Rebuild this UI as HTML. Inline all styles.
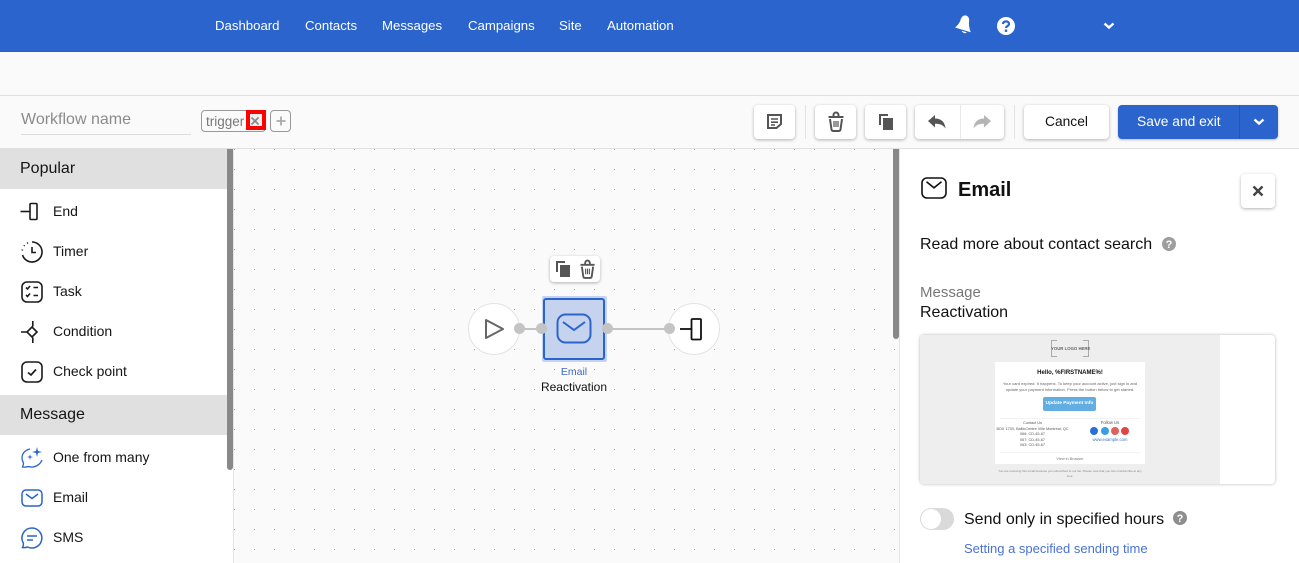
<!DOCTYPE html>
<html><head><meta charset="utf-8"><style>
*{box-sizing:border-box}
html,body{margin:0;padding:0;width:1299px;height:563px;overflow:hidden;background:#fafafa;font-family:"Liberation Sans",Arial,sans-serif;color:#111}
.t{position:absolute;white-space:nowrap;line-height:1}
.a{position:absolute}
svg{position:absolute;overflow:visible}
.btn{position:absolute;background:#fff;border-radius:4px;box-shadow:0 1px 3px rgba(0,0,0,.3)}
.nav{position:absolute;top:18px;color:#fff;font-size:13.2px;line-height:16px;white-space:nowrap}
.mi{position:absolute;left:53px;font-size:14px;line-height:16px;color:#151515;white-space:nowrap}
.hd{position:absolute;left:0;width:227px;height:40px;background:#e0e0e0;font-size:16px;line-height:40px;padding-left:20px;color:#151515}
.th{position:absolute;text-align:center;white-space:nowrap}
</style></head><body>
<div class="a" style="left:0;top:0;width:1299px;height:52px;background:#2a64cc"></div>
<div class="nav" style="left:215px">Dashboard</div>
<div class="nav" style="left:305px">Contacts</div>
<div class="nav" style="left:382px">Messages</div>
<div class="nav" style="left:468px">Campaigns</div>
<div class="nav" style="left:559px">Site</div>
<div class="nav" style="left:607px">Automation</div>
<svg style="left:954px;top:15px" width="18" height="20" viewBox="0 0 18 20"><path d="M1 12.500C4 10 5.500 8 6.500 5C7.500 1.500 10 0 12 0.500C15 1.500 15.500 4 15 7C14.700 10 15.500 14 16.700 17.300Z" fill="#fff"/><path d="M7.500 15.800L12.700 17.300C12 18.800 9 18.600 7.500 15.800Z" fill="#fff"/></svg>
<svg style="left:997px;top:17px" width="18" height="18" viewBox="0 0 18 18"><circle cx="9" cy="9" r="9" fill="#fff"/><path d="M6 7C6 3.500 12 3.500 12 7C12 9 9 9 9 11" fill="none" stroke="#2a64cc" stroke-width="2.200"/><rect x="7.800" y="12.500" width="2.400" height="2.400" fill="#2a64cc"/></svg>
<svg style="left:1103px;top:22px" width="12" height="8" viewBox="0 0 12 8"><path d="M1.500 1.500L6 5.500L10.500 1.500" fill="none" stroke="#fff" stroke-width="2.400"/></svg>

<div class="a" style="left:0;top:95px;width:1299px;height:54px;background:#fafafa;border-top:1px solid #e0e0e0;border-bottom:1px solid #e0e0e0"></div>
<div class="t" style="left:21px;top:112px;font-size:16px;color:#8b8b8b">Workflow name</div>
<div class="a" style="left:21px;top:134px;width:170px;height:1px;background:#ddd"></div>
<div class="a" style="left:201px;top:110px;width:65px;height:22px;border:1px solid #999;border-radius:4px"></div>
<div class="t" style="left:206px;top:115px;font-size:13.500px;color:#777">trigger</div>
<div class="a" style="left:246px;top:110px;width:20px;height:20px;border:4px solid #f00;background:#f0f0f0"></div>
<svg style="left:251px;top:116.500px" width="8" height="8"><path d="M0.500 0.500L7.500 7.500M7.500 0.500L0.500 7.500" stroke="#888" stroke-width="1.700"/></svg>
<div class="a" style="left:270px;top:110px;width:21px;height:22px;border:1px solid #999;border-radius:4px"></div>
<svg style="left:276px;top:116px" width="10" height="10"><path d="M5 0.500V9.500M0.500 5H9.500" stroke="#aaa" stroke-width="1.800"/></svg>

<div class="btn" style="left:754px;top:105px;width:41px;height:34px"></div>
<svg style="left:767px;top:114px" width="15" height="15" viewBox="0 0 15 15"><path d="M1 1H14V10L9.500 14H1Z" fill="none" stroke="#555" stroke-width="2"/><path d="M4 5H11M4 8.200H11M4 11H8" stroke="#555" stroke-width="1.600"/></svg>
<div class="a" style="left:805px;top:105px;width:1px;height:34px;background:#e3e3e3"></div>
<div class="btn" style="left:815px;top:105px;width:41px;height:34px"></div>
<svg style="left:828px;top:112px" width="16" height="20" viewBox="0 0 16 20"><path d="M0.500 5H15.500M5.500 5V3A2.500 2.500 0 0 1 10.500 3V5" fill="none" stroke="#555" stroke-width="2"/><path d="M2 7L3.500 17.500C3.600 18.500 4.500 19 5.500 19H10.500C11.500 19 12.400 18.500 12.500 17.500L14 7" fill="none" stroke="#555" stroke-width="2"/><path d="M6 9V15M8 9V15M10 9V15" stroke="#555" stroke-width="1.200"/></svg>
<div class="btn" style="left:865px;top:105px;width:41px;height:34px"></div>
<svg style="left:879px;top:114px" width="14" height="16" viewBox="0 0 14 16"><path d="M0 0H9V2H2V11H0Z" fill="#555"/><rect x="4" y="4" width="10" height="12" fill="#555"/></svg>
<div class="btn" style="left:915px;top:105px;width:89px;height:34px"></div>
<div class="a" style="left:960px;top:105px;width:1px;height:34px;background:#e8e8e8"></div>
<svg style="left:928px;top:115px" width="18" height="14" viewBox="0 0 18 14"><path d="M0 6L7 0V3.500C13 3.500 17 7 17.500 13.500C15 10 12 8.800 7 8.800V12.500Z" fill="#555"/></svg>
<svg style="left:973px;top:115px" width="18" height="14" viewBox="0 0 18 14"><path d="M18 6L11 0V3.500C5 3.500 1 7 0.500 13.500C3 10 6 8.800 11 8.800V12.500Z" fill="#b5b5b5"/></svg>
<div class="a" style="left:1014px;top:105px;width:1px;height:34px;background:#e3e3e3"></div>
<div class="btn" style="left:1024px;top:105px;width:85px;height:34px"></div>
<div class="t" style="left:1045px;top:115px;font-size:13.800px;color:#111">Cancel</div>
<div class="a" style="left:1118px;top:105px;width:160px;height:34px;background:#2a64cc;border-radius:4px;box-shadow:0 1px 2px rgba(0,0,0,.25)"></div>
<div class="a" style="left:1239px;top:105px;width:1px;height:34px;background:#2257b3"></div>
<div class="t" style="left:1137px;top:115px;font-size:13.800px;color:#fff">Save and exit</div>
<svg style="left:1253px;top:118px" width="12" height="8" viewBox="0 0 12 8"><path d="M1.500 1.500L6 5.500L10.500 1.500" fill="none" stroke="#fff" stroke-width="2.400"/></svg>

<div class="a" style="left:0;top:149px;width:234px;height:414px;background:#fff;border-right:1px solid #e5e5e5;overflow:hidden"></div>
<div class="hd" style="top:149px">Popular</div>
<div class="hd" style="top:395px">Message</div>
<div class="a" style="left:227px;top:149px;width:6px;height:321px;background:#888;border-radius:0 0 3px 3px"></div>
<div class="mi" style="top:203px">End</div>
<div class="mi" style="top:243px">Timer</div>
<div class="mi" style="top:283px">Task</div>
<div class="mi" style="top:323px">Condition</div>
<div class="mi" style="top:363px">Check point</div>
<div class="mi" style="top:449px">One from many</div>
<div class="mi" style="top:489px">Email</div>
<div class="mi" style="top:529px">SMS</div>
<svg style="left:20px;top:201px" width="20" height="20" viewBox="0 0 20 20"><path d="M0.500 10.500H9.500" stroke="#1a1a1a" stroke-width="1.600"/><rect x="10" y="2.500" width="7" height="16" rx="1" fill="none" stroke="#1a1a1a" stroke-width="1.600"/></svg>
<svg style="left:21px;top:241px" width="22" height="22" viewBox="0 0 22 22"><path d="M11 1A10 10 0 1 1 1.500 14" fill="none" stroke="#1a1a1a" stroke-width="1.600"/><path d="M1.200 9.500L1.500 8.500M3 5L3.600 4.300M6 2.300L7 1.800" stroke="#1a1a1a" stroke-width="1.600"/><path d="M11 6V11.500H15" fill="none" stroke="#1a1a1a" stroke-width="1.600"/></svg>
<svg style="left:21px;top:281px" width="22" height="22" viewBox="0 0 22 22"><rect x="1" y="1" width="20" height="20" rx="5" fill="none" stroke="#1a1a1a" stroke-width="1.600"/><path d="M5 6.500L6.500 8L9 5M5 14L6.500 15.500L9 12.500M12.500 6.500H17M12.500 14.500H17" fill="none" stroke="#1a1a1a" stroke-width="1.600"/></svg>
<svg style="left:20px;top:320px" width="20" height="24" viewBox="0 0 20 24"><path d="M1 12H7M12.800 1V6.500M12.800 17.500V23" stroke="#1a1a1a" stroke-width="1.600"/><path d="M12 7L17 12L12 17L7 12Z" fill="none" stroke="#1a1a1a" stroke-width="1.600"/></svg>
<svg style="left:21px;top:361px" width="22" height="22" viewBox="0 0 22 22"><rect x="1" y="1" width="20" height="20" rx="5" fill="none" stroke="#1a1a1a" stroke-width="1.600"/><path d="M7 11.500L10 14L15 8.500" fill="none" stroke="#1a1a1a" stroke-width="1.700"/></svg>
<svg style="left:21px;top:446px" width="23" height="23" viewBox="0 0 23 23"><path d="M9 3C4 4 1 7.500 1 12C1 14.500 2 16 2.500 17C2.500 19 2 20 1.500 21C4 21.500 6 20.800 7.500 20.500C13 22.500 19 19 21 14" fill="none" stroke="#2a64cc" stroke-width="1.300"/><path d="M16 1L17 5L21 6L17 7L16 11L15 7L11 6L15 5Z" fill="#2a64cc"/><path d="M9 8L9.600 10.400L12 11L9.600 11.600L9 14L8.400 11.600L6 11L8.400 10.400Z" fill="#2a64cc"/></svg>
<svg style="left:21px;top:489px" width="22" height="18" viewBox="0 0 22 18"><rect x="1" y="1" width="20" height="16" rx="4" fill="none" stroke="#2a64cc" stroke-width="1.500"/><path d="M5 5L11 9.500L17 5" fill="none" stroke="#2a64cc" stroke-width="1.500"/></svg>
<svg style="left:21px;top:527px" width="22" height="22" viewBox="0 0 22 22"><path d="M11 1A10 10 0 1 1 6.500 20C5 20.500 3.500 21 1.500 20.500C2.300 19.500 2.500 18 2.300 16A10 10 0 0 1 11 1Z" fill="none" stroke="#2a64cc" stroke-width="1.500"/><path d="M6 9H16M6 13H12" stroke="#2a64cc" stroke-width="1.500"/></svg>

<svg style="left:234px;top:149px" width="666" height="414"><defs><pattern id="d" x="0" y="0" width="20" height="20" patternUnits="userSpaceOnUse"><rect x="0" y="0" width="1" height="1" fill="#a0a0a0"/></pattern></defs><rect width="666" height="414" fill="#fafafa"/><rect width="666" height="414" fill="url(#d)"/></svg>
<div class="a" style="left:893px;top:149px;width:6px;height:190px;background:#888;border-radius:0 0 3px 3px"></div>

<div class="btn" style="left:550px;top:256px;width:50px;height:26px;border-radius:4px"></div>
<svg style="left:556px;top:261px" width="14" height="16" viewBox="0 0 14 16"><path d="M0 0H9V2H2V11H0Z" fill="#555"/><rect x="4" y="4" width="10" height="12" fill="#555"/></svg>
<svg style="left:580px;top:260px" width="15" height="19" viewBox="0 0 16 20"><path d="M0.500 5H15.500M5.500 5V3A2.500 2.500 0 0 1 10.500 3V5" fill="none" stroke="#555" stroke-width="2"/><path d="M2 7L3.500 17.500C3.600 18.500 4.500 19 5.500 19H10.500C11.500 19 12.400 18.500 12.500 17.500L14 7" fill="none" stroke="#555" stroke-width="2"/><path d="M6 9V15M8 9V15M10 9V15" stroke="#555" stroke-width="1.200"/></svg>

<div class="a" style="left:468px;top:303px;width:52px;height:52px;border-radius:50%;background:#fff;border:1px solid #e3e3e3"></div>
<svg style="left:484px;top:318px" width="20" height="22" viewBox="0 0 20 22"><path d="M2 2L19 11L2 20Z" fill="none" stroke="#666" stroke-width="2" stroke-linejoin="round"/></svg>
<div class="a" style="left:668px;top:303px;width:52px;height:52px;border-radius:50%;background:#fff;border:1px solid #e3e3e3"></div>
<svg style="left:679px;top:317px" width="24" height="24" viewBox="0 0 24 24"><path d="M1 12H12.500" stroke="#111" stroke-width="1.800"/><rect x="12.500" y="2" width="9.500" height="20.500" rx="1" fill="none" stroke="#111" stroke-width="1.800"/></svg>
<div class="a" style="left:519px;top:328px;width:22px;height:2px;background:#c4c4c4"></div>
<div class="a" style="left:607px;top:328px;width:62px;height:2px;background:#c4c4c4"></div>
<div class="a" style="left:542px;top:296px;width:65px;height:66px;background:#c5d3ee;border-radius:2px"></div>
<div class="a" style="left:543px;top:298px;width:62px;height:62px;border:2px solid #2a64cc;border-radius:3px"></div>
<svg style="left:556px;top:313px" width="37" height="31" viewBox="0 0 37 31"><rect x="1.500" y="1.500" width="33" height="28" rx="8" fill="none" stroke="#2a64cc" stroke-width="2"/><path d="M7 9L18 17L29 9" fill="none" stroke="#2a64cc" stroke-width="2"/></svg>
<div class="a" style="left:513.500px;top:323px;width:11px;height:11px;border-radius:50%;background:#c4c4c4"></div>
<div class="a" style="left:535.500px;top:323px;width:11px;height:11px;border-radius:50%;background:#c4c4c4"></div>
<div class="a" style="left:601.500px;top:323px;width:11px;height:11px;border-radius:50%;background:#c4c4c4"></div>
<div class="a" style="left:663.500px;top:323px;width:11px;height:11px;border-radius:50%;background:#c4c4c4"></div>
<div class="t" style="left:534px;width:80px;text-align:center;top:367px;font-size:10.500px;color:#3d69c8">Email</div>
<div class="t" style="left:524px;width:100px;text-align:center;top:381px;font-size:12px;color:#111">Reactivation</div>

<div class="a" style="left:899px;top:149px;width:400px;height:414px;background:#fff;border-left:1px solid #e5e5e5"></div>
<svg style="left:921px;top:177px" width="26" height="22" viewBox="0 0 26 22"><rect x="1" y="1" width="24" height="20" rx="5" fill="none" stroke="#111" stroke-width="1.600"/><path d="M5.500 4.800L13 10.800L20.500 4.800" fill="none" stroke="#111" stroke-width="1.600"/></svg>
<div class="t" style="left:958px;top:180px;font-size:20px;font-weight:bold;color:#111">Email</div>
<div class="btn" style="left:1241px;top:174px;width:34px;height:34px"></div>
<svg style="left:1252px;top:185px" width="12" height="12"><path d="M1.500 1.500L10.500 10.500M10.500 1.500L1.500 10.500" stroke="#444" stroke-width="2.400"/></svg>
<div class="t" style="left:920px;top:237px;font-size:16px;color:#111">Read more about contact search</div>
<svg style="left:1162px;top:237px" width="14" height="14"><circle cx="7" cy="7" r="7" fill="#9e9e9e"/><text x="7" y="11" font-size="11" font-weight="bold" fill="#fff" text-anchor="middle" font-family="Liberation Sans">?</text></svg>
<div class="t" style="left:920px;top:285px;font-size:15px;color:#777">Message</div>
<div class="t" style="left:920px;top:305px;font-size:16px;color:#111">Reactivation</div>

<div class="a" style="left:920px;top:335px;width:355px;height:149px;background:#fff;border-radius:4px;box-shadow:0 0 3px rgba(0,0,0,.3);overflow:hidden">
 <div class="a" style="left:0;top:0;width:300px;height:149px;background:#eee"></div>
 <div style="position:absolute;left:0;top:0;width:300px;height:149px;filter:blur(.35px)">
 <div class="a" style="left:131px;top:5px;width:6px;height:17px;border:1px solid #aaa;border-right:0"></div>
 <div class="a" style="left:163px;top:5px;width:6px;height:17px;border:1px solid #aaa;border-left:0"></div>
 <div class="th" style="left:131px;width:38px;top:11px;font-size:4.300px;color:#666;font-weight:bold">YOUR LOGO HERE</div>
 <div class="a" style="left:75px;top:27px;width:150px;height:102px;background:#fff"></div>
 <div class="th" style="left:75px;width:150px;top:35px;font-size:6px;line-height:7px;color:#111;font-weight:bold">Hello, %FIRSTNAME%!</div>
 <div class="th" style="left:75px;width:150px;top:46px;font-size:4.050px;line-height:6px;color:#666">Your card expired. It happens. To keep your account active, just sign in and<br>update your payment information. Press the button below to get started.</div>
 <div class="th" style="left:123px;width:53px;top:62px;height:14px;background:#62ade2;border-radius:2px;color:#fff;font-size:4.800px;font-weight:bold;line-height:14px">Update Payment Info</div>
 <div class="a" style="left:80px;top:83px;width:140px;height:1px;background:#f2f2f2"></div>
 <div class="th" style="left:75px;width:75px;top:86px;font-size:3.800px;line-height:5.500px;color:#555"><span style="color:#555">Contact Us</span><br>BOX 1700, BalticCentre Ville Montreal, QC<br>066: CD-45-67<br>067: CD-45-67<br>063: CD-45-67</div>
 <div class="th" style="left:150px;width:80px;top:85px;font-size:4.200px;color:#555">Follow Us</div>
 <div class="a" style="left:170px;top:92px;width:8px;height:8px;border-radius:50%;background:#2a6fd6"></div>
 <div class="a" style="left:181px;top:92px;width:8px;height:8px;border-radius:50%;background:#3b9ee0"></div>
 <div class="a" style="left:191px;top:92px;width:8px;height:8px;border-radius:50%;background:#e0605a"></div>
 <div class="a" style="left:201px;top:92px;width:8px;height:8px;border-radius:50%;background:#e04444"></div>
 <div class="th" style="left:150px;width:80px;top:102px;font-size:4.200px;color:#3b6fd0">www.example.com</div>
 <div class="a" style="left:80px;top:117px;width:140px;height:1px;background:#f2f2f2"></div>
 <div class="th" style="left:75px;width:150px;top:122px;font-size:3.800px;color:#777">View in Browser</div>
 <div class="th" style="left:75px;width:150px;top:134px;font-size:3px;line-height:5px;color:#888">You are receiving this email because you subscribed to our list. Please note that you can unsubscribe at any<br>time.</div>
 </div>
</div>

<div class="a" style="left:920px;top:508px;width:34px;height:22px;border-radius:11px;background:#d9d9d9"></div>
<div class="a" style="left:921px;top:509px;width:20px;height:20px;border-radius:50%;background:#fff"></div>
<div class="t" style="left:964px;top:512px;font-size:16px;color:#111">Send only in specified hours</div>
<svg style="left:1173px;top:511px" width="14" height="14"><circle cx="7" cy="7" r="7" fill="#8e8e8e"/><text x="7" y="11" font-size="11" font-weight="bold" fill="#fff" text-anchor="middle" font-family="Liberation Sans">?</text></svg>
<div class="t" style="left:964px;top:542px;font-size:13px;color:#4a72d4">Setting a specified sending time</div>
</body></html>
